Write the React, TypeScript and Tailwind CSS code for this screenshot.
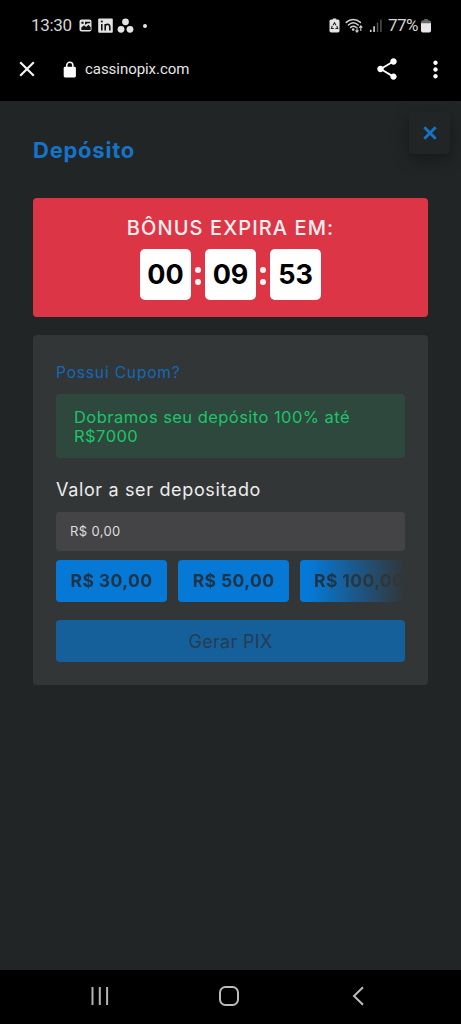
import React from "react";
import { MdMoreVert, MdShare } from "react-icons/md";

const timer = ["00", "09", "53"];
const values = ["R$ 30,00", "R$ 50,00", "R$ 100,00"];

function StatusBar() {
  return (
    <div className="flex h-[50px] items-center pl-[31px] pr-[30px] pt-[2px] font-['Roboto',sans-serif] text-[17px] text-[#d6d6d6]">
      <span className="w-[48px] whitespace-nowrap tracking-[-0.35px]">13:30</span>
      <svg className="block" width="56" height="16" viewBox="0 0 56 16">
        <rect x="0.5" y="1.5" width="12" height="12" rx="2" fill="#e4e4e4" />
        <path d="M2.3 12V9.6l2.8-2.3 2 1.6 2.4-2.1 2.2 2.4V12z" fill="#111" />
        <path d="M2.4 3.8h2.2v2H2.4zM6 3.7h5.2v1.5H8.5L6.8 6.4H6z" fill="#111" />
        <rect x="19.2" y="0.5" width="14.6" height="14.2" rx="1" fill="#e4e4e4" />
        <path d="M22.8 6v6.4M26.2 12.4V6M26.2 9c0-3.7 4.6-3.6 4.6 0v3.4" fill="none" stroke="#111" strokeWidth="1.6" />
        <circle cx="22.8" cy="3.5" r="1.1" fill="#111" />
        <circle cx="46.5" cy="3.8" r="3.4" fill="#e4e4e4" />
        <circle cx="42" cy="11.3" r="3.4" fill="#e4e4e4" />
        <circle cx="51" cy="11.3" r="3.4" fill="#e4e4e4" />
      </svg>
      <span className="ml-[8px] h-[4px] w-[4px] rounded-full bg-[#e4e4e4]" />
      <svg className="ml-auto block" width="54" height="16" viewBox="0 0 54 16">
        <path d="M2.2 1.6h1.6V.4h3.4v1.2h1.6c1 0 1.7.8 1.7 1.8v9.4c0 1-.7 1.7-1.7 1.7H2.2c-1 0-1.7-.7-1.7-1.7V3.4c0-1 .7-1.8 1.7-1.8z" fill="#e4e4e4" />
        <path d="M4 7.2l1.5-2.4L7 7.2M7.8 8l.9 2.5H6.4M4.8 10.5H2.4L3.2 8" fill="none" stroke="#222" strokeWidth="1.1" />
        <g fill="none" stroke="#d0d0d0" strokeWidth="1.5" strokeLinecap="round">
          <path d="M17.2 4.4c4.2-4 10-4 14.2 0" />
          <path d="M19.4 7c3-2.8 6.8-2.8 9.8 0" />
          <path d="M21.6 9.4c1.8-1.5 3.6-1.5 5.3-.2" />
        </g>
        <circle cx="24.2" cy="11.6" r="1.3" fill="#d0d0d0" />
        <path d="M28 9v5M26.5 12.4l1.5 1.8 1.5-1.8M31.8 13V8M30.3 9.7l1.5-1.8 1.5 1.8" fill="none" stroke="#d0d0d0" strokeWidth="1.1" />
        <path d="M41.7 14v-2.2M45.1 14V8.2" stroke="#d6d6d6" strokeWidth="1.6" />
        <path d="M48.5 14V4.4M51.9 14V1.5" stroke="#555" strokeWidth="1.4" />
      </svg>
      <span className="ml-[5px] w-[33px] whitespace-nowrap tracking-[-0.5px]">77%</span>
      <svg className="block" width="10" height="16" viewBox="0 0 10 16">
        <path d="M1.7 2.2h1.6V1h3.4v1.2h1.6L10 3.6V6H0V3.6z" fill="#686868" />
        <path d="M0 5.2h10v8l-1.4 1.4H1.4L0 13.2z" fill="#e8e8e8" />
      </svg>
    </div>
  );
}

function BrowserBar() {
  return (
    <div className="flex h-[51px] items-center pb-[13px] pl-[19px] pr-[12px] text-white">
      <svg className="block" width="16" height="16" viewBox="0 0 16 16">
        <path d="M1.2 1.2l13.6 13.6M14.8 1.2L1.2 14.8" stroke="#f2f2f2" strokeWidth="2.2" />
      </svg>
      <svg className="ml-[28px] block" width="14" height="17" viewBox="0 0 14 17">
        <rect x="0.7" y="5.8" width="12.2" height="10.6" rx="1.4" fill="#fff" />
        <path d="M3.7 6.5V4.4a3.1 3.1 0 0 1 6.2 0v2.1" fill="none" stroke="#fff" strokeWidth="1.5" />
      </svg>
      <span className="ml-[8px] pt-[1px] font-['Roboto',sans-serif] text-[15px] tracking-[-0.05px] text-[#e6e6e6]">
        cassinopix.com
      </span>
      <MdShare className="ml-auto h-[26px] w-[26px]" />
      <MdMoreVert className="ml-[22px] h-[27px] w-[27px]" />
    </div>
  );
}

function Countdown() {
  return (
    <div className="mt-[32px] h-[119px] rounded-[4px] bg-[#dc3545] pt-[16px] text-center">
      <div className="h-[28px] whitespace-nowrap text-[20px] font-medium leading-[28px] tracking-[1.1px] text-[#ffeff0]">
        BÔNUS EXPIRA EM:
      </div>
      <div className="mt-[7px] flex justify-center">
        {timer.map((item, key) => (
          <React.Fragment key={key}>
            {key > 0 && (
              <div className="flex w-[14px] flex-col items-center justify-center gap-[6px] pt-[2px]">
                <span className="h-[6px] w-[6px] rounded-full bg-[#fff3f3]" />
                <span className="h-[6px] w-[6px] rounded-full bg-[#fff3f3]" />
              </div>
            )}
            <div className="flex h-[51px] w-[51px] items-center justify-center rounded-[5px] bg-white pt-[2px] text-[27px] font-bold text-black">
              {item}
            </div>
          </React.Fragment>
        ))}
      </div>
    </div>
  );
}

function DepositForm() {
  return (
    <div className="mt-[18px] h-[350px] rounded-[4px] bg-[#333637] px-[23px] pt-[27px]">
      <a className="block h-[22px] text-[15.5px] leading-[22px] tracking-[0.85px] text-[#1269b7]">
        Possui Cupom?
      </a>
      <div className="mt-[10px] h-[64px] rounded-[4px] bg-[#2e483d] pl-[18px] pt-[14px] text-[16.5px] leading-[19px] tracking-[0.45px] text-[#1dc469]">
        Dobramos seu depósito 100% até
        <br />
        R$7000
      </div>
      <div className="mt-[20px] h-[24px] text-[18px] leading-[24px] tracking-[0.65px] text-[#ececec]">
        Valor a ser depositado
      </div>
      <div className="mt-[10px] flex h-[39px] items-center rounded-[4px] bg-[#444446] px-[14px] pt-px text-[13px] tracking-[0.35px] text-[#dedede]">
        R$ 0,00
      </div>
      <div className="mt-[9px] flex gap-[11px] overflow-hidden [mask-image:linear-gradient(to_right,black_73%,transparent_100%)]">
        {values.map((item) => (
          <button
            key={item}
            className="h-[42px] min-w-[111px] shrink-0 whitespace-nowrap rounded-[4px] bg-[#0678d6] px-[14px] pt-px text-[17.5px] font-bold tracking-[0.4px] text-[#1f3446]"
          >
            {item}
          </button>
        ))}
      </div>
      <button className="mt-[18px] block h-[42px] w-full rounded-[4px] bg-[#155f9a] text-[18px] tracking-[0.3px] text-[#243d50]">
        Gerar PIX
      </button>
    </div>
  );
}

function NavigationBar() {
  return (
    <div className="flex h-[54px] items-center justify-between bg-black pb-[2px] pl-[90px] pr-[97px]">
      <svg width="20" height="20" viewBox="0 0 20 20">
        <path d="M2.5 1v18M9.8 1v18M17.1 1v18" stroke="#b4b4b4" strokeWidth="2" />
      </svg>
      <svg className="-ml-[5px]" width="20" height="20" viewBox="0 0 20 20">
        <rect x="1" y="1" width="18" height="18" rx="5.5" fill="none" stroke="#bcbcbc" strokeWidth="2" />
      </svg>
      <svg width="12" height="20" viewBox="0 0 12 20">
        <path d="M11 1.3L2 10l9 8.7" fill="none" stroke="#bcbcbc" strokeWidth="2" />
      </svg>
    </div>
  );
}

function App() {
  return (
    <div className="flex h-[1024px] w-[461px] flex-col overflow-hidden bg-black font-['Inter',sans-serif]">
      <StatusBar />
      <BrowserBar />
      <main className="relative flex-1 bg-[#212526] px-[33px] pt-[33px]">
        <button className="absolute right-[11px] top-[11px] flex h-[42px] w-[41px] items-center justify-center rounded-[4px] bg-[#212526] shadow-[0_5px_16px_rgba(0,0,0,0.35)]">
          <svg width="14" height="14" viewBox="0 0 14 14">
            <path d="M1.3 1.3l11.4 11.4M12.7 1.3L1.3 12.7" stroke="#1674c8" strokeWidth="2.8" />
          </svg>
        </button>
        <h1 className="h-[32px] text-[22px] font-bold leading-[32px] tracking-[0.75px] text-[#1674c8]">
          Depósito
        </h1>
        <Countdown />
        <DepositForm />
      </main>
      <NavigationBar />
    </div>
  );
}

export default App;
